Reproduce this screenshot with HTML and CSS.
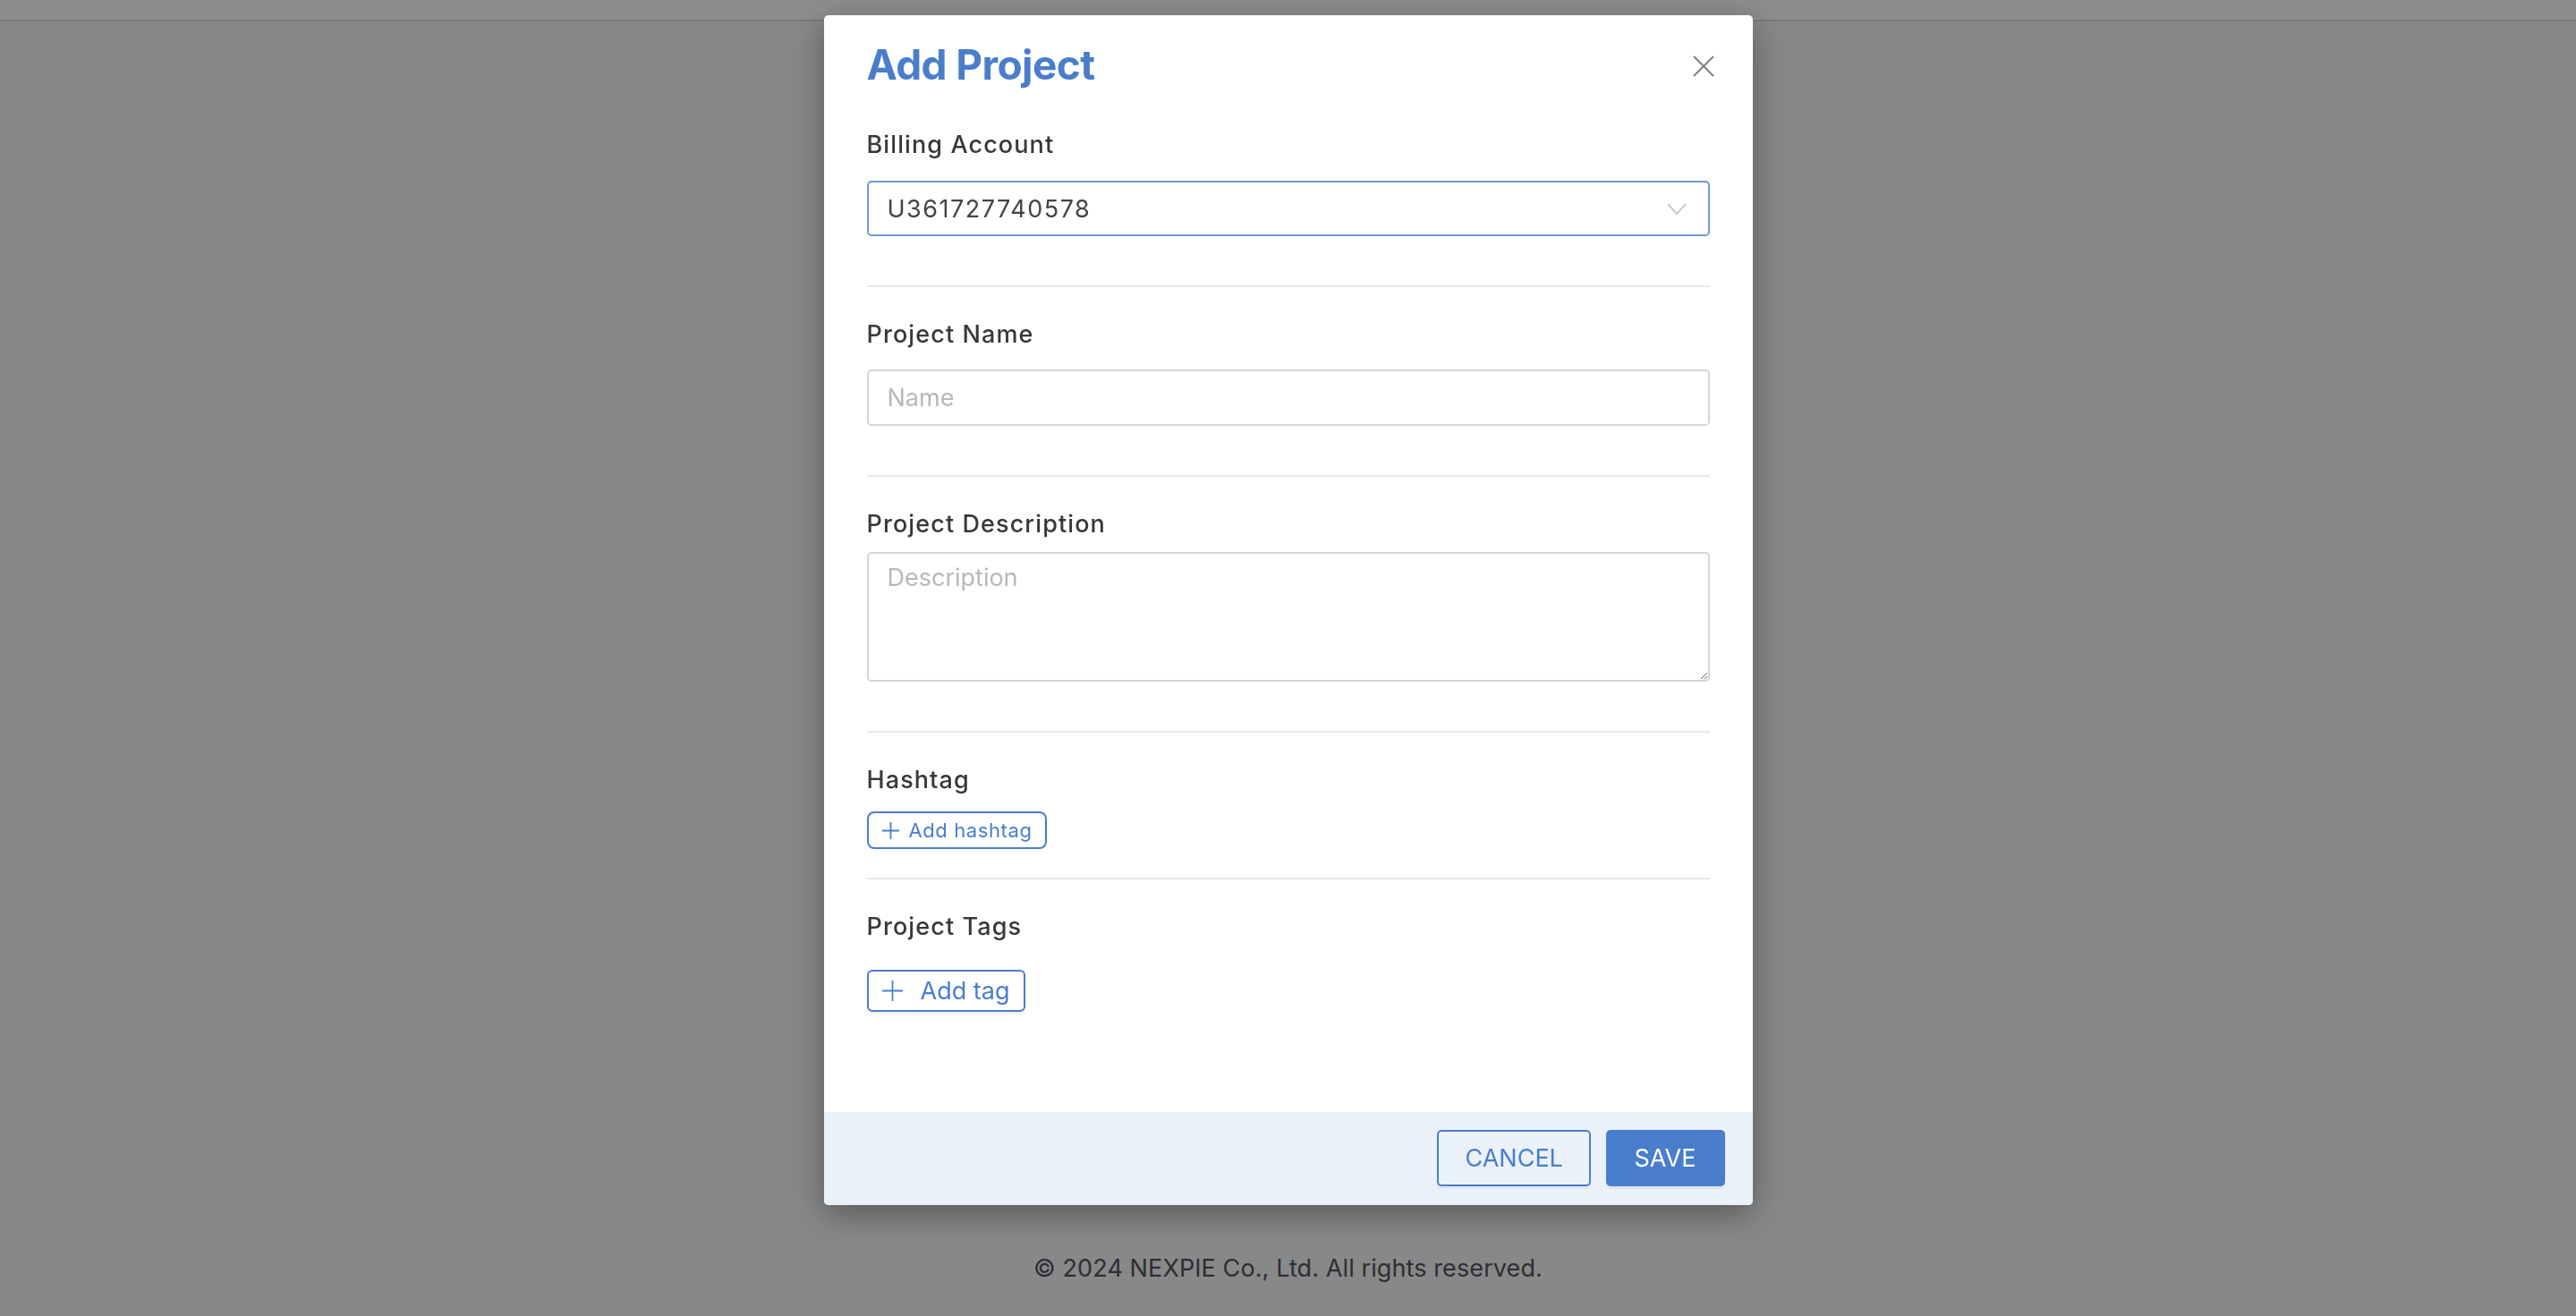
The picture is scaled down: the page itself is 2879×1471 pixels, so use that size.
FILE: index.html
```html
<!DOCTYPE html>
<html lang="en">
<head>
  <meta charset="UTF-8">
  <title>Add Project</title>
  <link rel="stylesheet" href="styles.css">
</head>
<body>
  <div class="topbar"></div>
  <main class="content"></main>
  <footer class="copyright">© 2024 NEXPIE Co., Ltd. All rights reserved.</footer>

  <div class="overlay">
    <div class="modal">
      <div class="modal-head">
        <h2 class="modal-title">Add Project</h2>
        <button class="close-btn" aria-label="Close">
          <svg width="24" height="24" viewBox="0 0 24 24"><path d="M1 1 L23 23 M23 1 L1 23" stroke="#7f7f7f" stroke-width="2" fill="none"/></svg>
        </button>
      </div>

      <div class="modal-body">
        <div class="section first">
          <label class="field-label">Billing Account</label>
          <div class="select">
            <span>U361727740578</span>
            <svg width="22" height="13" viewBox="0 0 22 13"><path d="M1 1 L11 12 L21 1" stroke="#bdbdbd" stroke-width="1.6" fill="none"/></svg>
          </div>
        </div>

        <div class="section name">
          <label class="field-label">Project Name</label>
          <input class="input" type="text" placeholder="Name">
        </div>

        <div class="section desc">
          <label class="field-label">Project Description</label>
          <textarea class="textarea" placeholder="Description"></textarea>
        </div>

        <div class="section hashtags">
          <label class="field-label">Hashtag</label>
          <button class="chip-btn small">
            <svg width="19" height="19" viewBox="0 0 19 19"><path d="M9.5 0 V19 M0 9.5 H19" stroke="#4a7ecb" stroke-width="1.8"/></svg>
            Add hashtag
          </button>
        </div>

        <div class="section last">
          <label class="field-label">Project Tags</label>
          <button class="chip-btn large">
            <svg width="23" height="23" viewBox="0 0 23 23"><path d="M11.5 0 V23 M0 11.5 H23" stroke="#4a7ecb" stroke-width="1.8"/></svg>
            Add tag
          </button>
        </div>
      </div>

      <div class="modal-foot">
        <button class="btn btn-outline">CANCEL</button>
        <button class="btn btn-primary">SAVE</button>
      </div>
    </div>
  </div>
</body>
</html>
```

FILE: styles.css
```css
html, body {
  height: 100%;
}
body {
  margin: 0;
  font-family: Inter, "Noto Sans", sans-serif;
  background-color: #87888a;
  display: flex;
  flex-direction: column;
}
.topbar {
  height: 22px;
  background: #8d8d8d;
  border-bottom: 2px solid #7d7d80;
}
.content {
  flex: 1;
}
.copyright {
  text-align: center;
  font-size: 27px;
  line-height: 32px;
  letter-spacing: 0.1px;
  color: #2e2e30;
  padding-bottom: 37px;
}
.overlay {
  position: fixed;
  inset: 0;
  display: flex;
  justify-content: center;
  align-items: flex-start;
  padding-top: 17px;
}
.modal {
  width: 1038px;
  background: #ffffff;
  border-radius: 5px;
  box-shadow: 0 10px 36px rgba(0, 0, 0, 0.35);
  overflow: hidden;
}
.modal-head {
  display: flex;
  justify-content: space-between;
  align-items: flex-start;
  padding: 27px 43px 0 48px;
}
.modal-title {
  margin: 0;
  font-size: 46px;
  line-height: 56px;
  font-weight: 700;
  color: #4a7ecb;
  letter-spacing: -0.6px;
}
.close-btn {
  background: none;
  border: none;
  padding: 0;
  margin-top: 18px;
  cursor: pointer;
  display: flex;
}
.modal-body {
  padding: 0 48px;
}
.section {
  padding: 37px 0 55px;
  border-bottom: 2px solid #e8e8e8;
}
.section.first {
  padding-top: 46px;
}
.section.hashtags {
  padding-bottom: 32px;
}
.section.last {
  border-bottom: none;
  padding-bottom: 112px;
}
.field-label {
  display: block;
  font-size: 27px;
  line-height: 32px;
  font-weight: 500;
  letter-spacing: 1.1px;
  color: #383838;
  margin-bottom: 24px;
}
.name .field-label {
  margin-bottom: 23px;
}
.desc .field-label {
  margin-bottom: 15px;
}
.hashtags .field-label {
  margin-bottom: 19px;
}
.last .field-label {
  margin-bottom: 32px;
}
.select {
  height: 62px;
  box-sizing: border-box;
  border: 2px solid #6a9bdb;
  border-radius: 5px;
  display: flex;
  align-items: center;
  justify-content: space-between;
  padding: 0 24px 0 21px;
  font-size: 27px;
  letter-spacing: 1.5px;
  color: #444444;
}
.input, .textarea {
  display: block;
  width: 100%;
  box-sizing: border-box;
  border: 2px solid #d6d6d6;
  border-radius: 5px;
  font-family: inherit;
  font-size: 27px;
  color: #444444;
  padding: 0 21px;
  outline: none;
}
.input {
  height: 63px;
}
.textarea {
  height: 145px;
  padding-top: 10px;
  resize: vertical;
}
.input::placeholder, .textarea::placeholder {
  color: #b8b8b8;
}
.chip-btn {
  display: inline-flex;
  align-items: center;
  box-sizing: border-box;
  background: #ffffff;
  border: 2px solid #4a7ecb;
  color: #4a7ecb;
  font-family: inherit;
  cursor: pointer;
}
.chip-btn.small {
  height: 42px;
  border-radius: 8px;
  font-size: 22px;
  letter-spacing: 0.6px;
  gap: 11px;
  padding: 0 14px 0 15px;
}
.chip-btn.large {
  height: 47px;
  border-radius: 6px;
  font-size: 27px;
  gap: 20px;
  padding: 0 16px 0 15px;
  box-shadow: 0 3px 2px rgba(0, 0, 0, 0.05);
}
.modal-foot {
  background: #ebf1f9;
  display: flex;
  justify-content: flex-end;
  gap: 17px;
  padding: 20px 31px 21px;
}
.btn {
  height: 63px;
  box-sizing: border-box;
  border-radius: 5px;
  font-family: inherit;
  font-size: 27px;
  padding: 0 30px;
  cursor: pointer;
  box-shadow: 0 3px 2px rgba(0, 0, 0, 0.05);
}
.btn-outline {
  width: 172px;
  background: transparent;
  border: 2px solid #4a7ecb;
  color: #4a7ecb;
}
.btn-primary {
  width: 133px;
  background: #487ecb;
  border: none;
  color: #ffffff;
}
```
